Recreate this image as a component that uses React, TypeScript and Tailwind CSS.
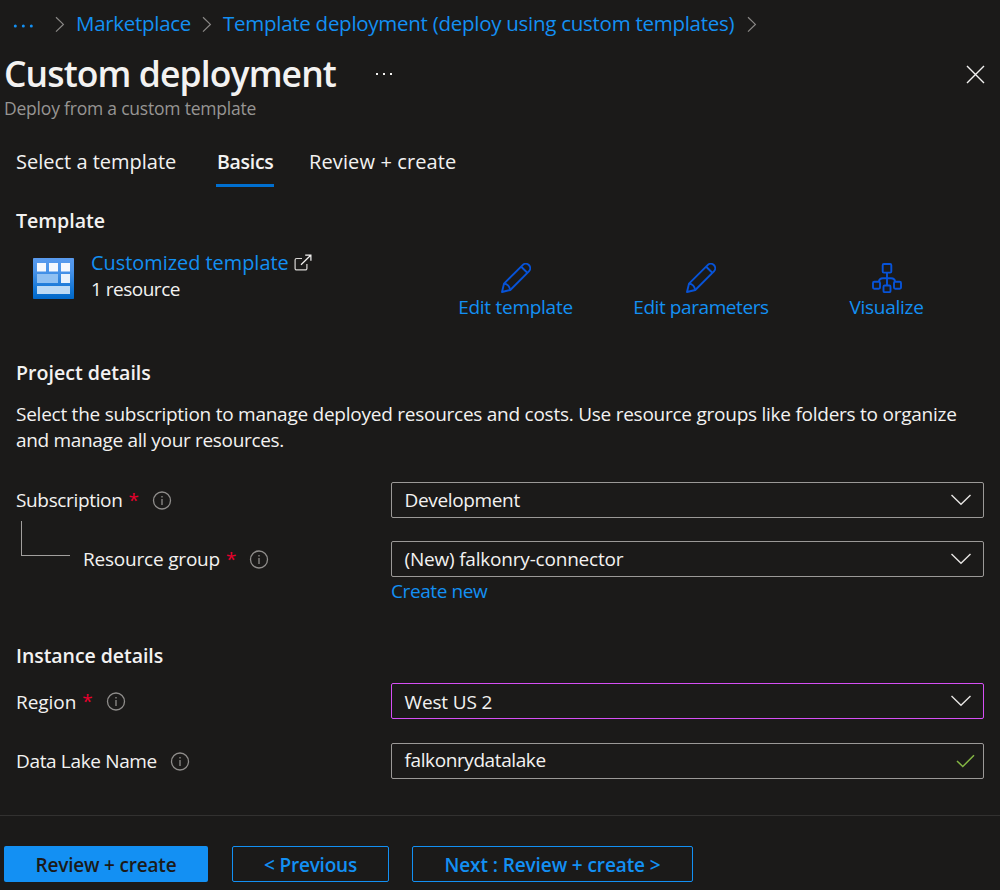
import type { ReactNode } from "react";
import { clsx } from "clsx";

interface FieldProps {
  label: string;
  labelClass?: string;
  required?: boolean;
  indented?: boolean;
  children: ReactNode;
}

interface BoxProps {
  value: string;
  valueClass?: string;
  active?: boolean;
  valid?: boolean;
}

function ChevronRight({ className }: { className?: string }) {
  return (
    <svg className={clsx("h-[17px] w-[10px] shrink-0", className)} viewBox="0 0 10 17" fill="none" stroke="#8a8886" strokeWidth="1.2">
      <path d="M1 1.2 8.4 8.4 1 15.6" />
    </svg>
  );
}

function InfoIcon() {
  return (
    <svg className="h-5 w-5 shrink-0" viewBox="0 0 20 20" fill="none" stroke="#8f8d8b" strokeWidth="1.3">
      <circle cx="10" cy="10.5" r="8.5" />
      <path d="M10 8.9v6M10 5.9v1.6" />
    </svg>
  );
}

function PencilIcon() {
  return (
    <svg className="h-[30px] w-[30px]" viewBox="0 0 30 30" fill="none" stroke="#0753d8" strokeWidth="1.9" strokeLinejoin="round">
      <path d="M1 29 3 20.6 21.6 2.1a4.4 4.4 0 0 1 6.3 6.2L9.3 27Z" />
      <path d="M20.2 3.8 26.3 9.8M3 20.8c3.3 0 6 2.7 6 6" />
    </svg>
  );
}

function VisualizeIcon() {
  return (
    <svg className="h-[30px] w-[30px]" viewBox="0 0 30 30" fill="none" stroke="#0753d8" strokeWidth="1.9" strokeLinejoin="round">
      <rect x="10.7" y="1" width="8.6" height="8.6" rx="1.2" />
      <rect x="1" y="18.8" width="7" height="7" rx="1.2" />
      <rect x="22" y="18.8" width="7" height="7" rx="1.2" />
      <rect x="11.5" y="22.5" width="7" height="6.6" rx="1.2" />
      <path d="M15 9.6v12.9M7 18.8c0-2.6 1.6-3.6 4-3.6h8c2.4 0 4 1 4 3.6" />
    </svg>
  );
}

function TemplateIcon() {
  return (
    <svg className="h-[41px] w-[41px]" viewBox="0 0 41 41">
      <defs>
        <linearGradient id="tile" x1="0" y1="0" x2="0" y2="1">
          <stop offset="0" stopColor="#5a9bee" />
          <stop offset="0.3" stopColor="#4a94ea" />
          <stop offset="0.8" stopColor="#0f74d4" />
          <stop offset="1" stopColor="#0067c8" />
        </linearGradient>
      </defs>
      <rect width="41" height="41" rx="0.8" fill="url(#tile)" />
      <g fill="#f5f8fe">
        <rect x="4" y="5" width="9" height="8.5" />
        <rect x="16" y="5" width="9" height="8.5" />
        <rect x="28" y="5" width="9" height="8.5" />
        <rect x="28" y="16" width="9" height="9" fill="#e9f2fc" />
      </g>
      <rect x="4" y="16" width="21" height="9" fill="#8fc0f2" />
      <rect x="4" y="28" width="33" height="8" fill="#bcdaf5" />
    </svg>
  );
}

function ExternalIcon() {
  return (
    <svg className="h-[18px] w-[18px]" viewBox="0 0 18 18" fill="none" stroke="#d8d6d4" strokeWidth="1.2">
      <path d="M8 4.5H2.6a1.5 1.5 0 0 0-1.5 1.5v8.4a1.5 1.5 0 0 0 1.5 1.5h8.8a1.5 1.5 0 0 0 1.5-1.5V10" />
      <path d="M11.2 1.1h5.7v5.7M16.7 1.3 7 10.8" stroke="#f3f2f1" />
    </svg>
  );
}

function Field({ label, labelClass, required, indented, children }: FieldProps) {
  return (
    <div className="flex h-9 items-center">
      <div className={clsx("flex h-full w-[375px] shrink-0 items-center", indented && "pl-[5px]")}>
        {indented && <span className="-mt-[42px] mr-[13px] h-[35px] w-[49px] border-b border-l border-[#a19f9d]" />}
        <span className={labelClass}>{label}</span>
        {required && <span className="ml-[6px] text-[#e8002d]">*</span>}
        <span className="ml-[13px]">
          <InfoIcon />
        </span>
      </div>
      {children}
    </div>
  );
}

function Box({ value, valueClass, active, valid }: BoxProps) {
  return (
    <div
      className={clsx(
        "flex h-9 w-[593px] items-center justify-between rounded-[2px] border pl-[12.5px]",
        active ? "border-[#d64ff5]" : "border-[#9b9997]",
        valid ? "pr-[8px]" : "pr-[12px]"
      )}
    >
      <span className={valueClass}>{value}</span>
      {valid ? (
        <svg className="h-[14px] w-[19px]" viewBox="0 0 19 14" fill="none" stroke="#84b544" strokeWidth="1.5">
          <path d="M1 7 6.8 12.5 18 1.2" />
        </svg>
      ) : (
        <svg className="h-[12px] w-[20px]" viewBox="0 0 20 12" fill="none" stroke="#e6e4e2" strokeWidth="1.4">
          <path d="M.5 1 10 10.3 19.5 1" />
        </svg>
      )}
    </div>
  );
}

export default function App() {
  return (
    <div className="h-[890px] w-[1000px] overflow-hidden bg-[#1b1a19] font-['Open_Sans',sans-serif] text-[19px] leading-[26px] tracking-[-0.27px] whitespace-nowrap text-[#f3f2f1]">
      {/* Breadcrumb */}
      <nav className="flex h-12 items-center text-[20.5px] tracking-[-0.29px] text-[#1390f3]">
        <svg className="mt-[3px] ml-[13px] h-1 w-[21px]" viewBox="0 0 21 4" fill="currentColor">
          <circle cx="2.3" cy="2" r="1.5" />
          <circle cx="10.3" cy="2" r="1.5" />
          <circle cx="18.3" cy="2" r="1.5" />
        </svg>
        <ChevronRight className="ml-[21px]" />
        <span className="ml-[11px] w-[126px] pb-[2px]">Marketplace</span>
        <ChevronRight />
        <span className="ml-[11px] w-[528px] pb-[2px] tracking-[-0.27px]">Template deployment (deploy using custom templates)</span>
        <ChevronRight className="-ml-[4px]" />
      </nav>

      {/* Title */}
      <header>
        <div className="flex h-[52px] items-center pl-1">
          <h1 className="w-[371px] pb-[2px] text-[35.5px] font-semibold tracking-[-0.9px]">Custom deployment</h1>
          <svg className="h-1 w-[18px]" viewBox="0 0 18 4" fill="#f3f2f1">
            <rect x="1" y="1" width="2" height="2" />
            <rect x="8" y="1" width="2" height="2" />
            <rect x="15" y="1" width="2" height="2" />
          </svg>
          <svg className="mr-[15px] ml-auto h-[19px] w-[19px]" viewBox="0 0 19 19" fill="none" stroke="#f3f2f1" strokeWidth="1.4">
            <path d="m1 1 17 17M18 1 1 18" />
          </svg>
        </div>
        <p className="pl-1 text-[17.5px] leading-[17px] tracking-[-0.21px] text-[#979593]">Deploy from a custom template</p>
      </header>

      {/* Tabs */}
      <div className="mt-[27px] flex h-[43px] pl-4 text-[20px] leading-[35px] tracking-normal">
        <span className="w-[200px]">Select a template</span>
        <span className="w-[58px] border-b-[3px] border-[#006fd0] pl-px text-[19.5px] font-semibold tracking-[-0.3px]">Basics</span>
        <span className="ml-[35px] tracking-[0.12px]">Review + create</span>
      </div>

      <main className="px-4">
        <h2 className="mt-[21px] text-[19.6px] font-semibold tracking-normal">Template</h2>
        <div className="mt-4 flex h-[78px]">
          <div className="mt-2 ml-[17px] w-[58px]">
            <TemplateIcon />
          </div>
          <div className="w-[332px]">
            <div className="flex items-center">
              <span className="w-[203px] text-[19.9px] tracking-normal text-[#1390f3]">Customized template</span>
              <ExternalIcon />
            </div>
            <div className="tracking-[-0.5px]">1 resource</div>
          </div>
          <div className="mt-[13px] flex text-center text-[#1390f3]">
            <div className="flex w-[185px] flex-col items-center">
              <PencilIcon />
              <span className="mt-[1px]">Edit template</span>
            </div>
            <div className="flex w-[185px] flex-col items-center">
              <PencilIcon />
              <span className="mt-[1px] ml-px tracking-[-0.42px]">Edit parameters</span>
            </div>
            <div className="ml-px flex w-[185px] flex-col items-center">
              <VisualizeIcon />
              <span className="mt-[1px]">Visualize</span>
            </div>
          </div>
        </div>

        <h2 className="mt-8 text-[19.6px] font-semibold tracking-normal">Project details</h2>
        <p className="mt-[15px] tracking-[-0.25px]">
          Select the subscription to manage deployed resources and costs. Use resource groups like folders to organize
          <br />
          <span className="tracking-[-0.32px]">and manage all your resources.</span>
        </p>

        <div className="mt-[29px] flex flex-col gap-[23px]">
          <Field label="Subscription" labelClass="tracking-[-0.35px]" required>
            <Box value="Development" valueClass="tracking-[-0.35px]" />
          </Field>
          <Field label="Resource group" labelClass="tracking-[-0.2px]" required indented>
            <Box value="(New) falkonry-connector" valueClass="tracking-[-0.2px]" />
          </Field>
        </div>
        <div className="mt-[1px] pl-[375px] tracking-[-0.4px] text-[#1390f3]">Create new</div>

        <h2 className="mt-[39px] text-[19.5px] font-semibold tracking-[-0.05px]">Instance details</h2>
        <div className="mt-[14px] flex flex-col gap-6">
          <Field label="Region" labelClass="pt-px tracking-[-0.05px]" required>
            <Box value="West US 2" valueClass="pt-px tracking-[-0.15px]" active />
          </Field>
          <Field label="Data Lake Name" labelClass="tracking-[-0.35px]">
            <Box value="falkonrydatalake" valueClass="pb-[2px] tracking-[-0.4px]" valid />
          </Field>
        </div>
      </main>

      {/* Footer */}
      <footer className="mt-[36px] flex border-t border-[#323130] pt-[30px] pl-1 font-semibold">
        <button className="h-9 w-[204px] rounded-[2px] bg-[#1390f3] pt-px tracking-[-0.2px] text-[#1b1a19]">Review + create</button>
        <button className="ml-6 h-9 w-[157px] rounded-[2px] border border-[#1390f3] pt-px tracking-[-0.2px] text-[#1390f3]">&lt; Previous</button>
        <button className="ml-[23px] h-9 w-[281px] rounded-[2px] border border-[#1390f3] pt-px tracking-[-0.1px] text-[#1390f3]">
          Next : Review + create &gt;
        </button>
      </footer>
    </div>
  );
}
